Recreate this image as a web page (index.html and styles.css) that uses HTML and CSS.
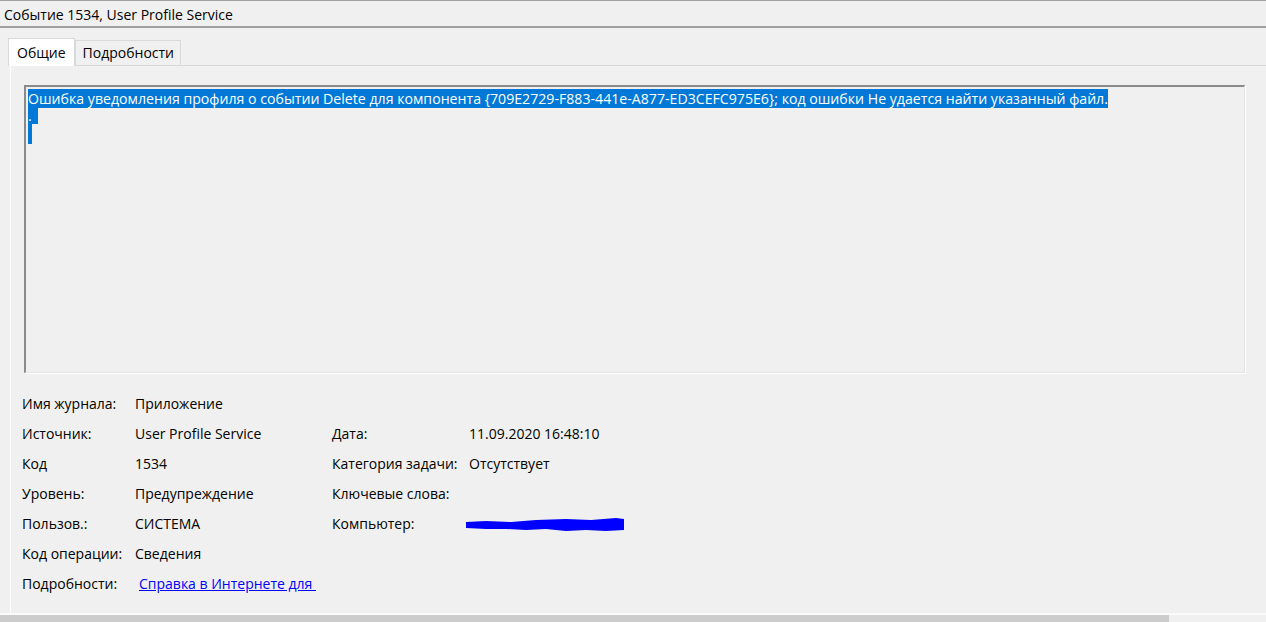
FILE: index.html
```html
<!DOCTYPE html>
<html lang="ru">
<head>
    <meta charset="UTF-8">
    <meta name="viewport" content="width=device-width, initial-scale=1.0">
    <title>Событие 1534, User Profile Service</title>
    <link rel="stylesheet" href="styles.css">
</head>
<body>
    <div class="janela">
        <div class="titulo">Событие 1534, User Profile Service</div>

        <div class="abas">
            <div class="aba aba_ativa">Общие</div>
            <div class="aba">Подробности</div>
        </div>

        <div class="painel">
            <div class="caixa_texto">
                <div class="linha"><span class="sel">Ошибка уведомления профиля о событии Delete для компонента {709E2729-F883-441e-A877-ED3CEFC975E6}; код ошибки Не удается найти указанный файл.</span></div>
                <div class="linha"><span class="sel sel_ponto">.</span></div>
                <div class="linha"><span class="sel sel_cursor"></span></div>
            </div>

            <div class="campos">
                <div class="rotulo">Имя журнала:</div>
                <div class="valor">Приложение</div>
                <div class="rotulo"></div>
                <div class="valor"></div>

                <div class="rotulo">Источник:</div>
                <div class="valor">User Profile Service</div>
                <div class="rotulo">Дата:</div>
                <div class="valor">11.09.2020 16:48:10</div>

                <div class="rotulo">Код</div>
                <div class="valor">1534</div>
                <div class="rotulo">Категория задачи:</div>
                <div class="valor">Отсутствует</div>

                <div class="rotulo">Уровень:</div>
                <div class="valor">Предупреждение</div>
                <div class="rotulo">Ключевые слова:</div>
                <div class="valor"></div>

                <div class="rotulo">Пользов.:</div>
                <div class="valor">СИСТЕМА</div>
                <div class="rotulo">Компьютер:</div>
                <div class="valor">
                    <!-- nome do computador riscado -->
                    <svg class="risco" width="160" height="16" viewBox="0 0 160 16">
                        <path d="M0 5 L20 4 L45 5 L70 3 L100 2 L125 3 L150 1 L158 2 L158 13 L140 14 L120 13 L100 14 L80 12 L60 13 L40 12 L20 12 L0 11 Z" fill="#0000ff"/>
                    </svg>
                </div>

                <div class="rotulo">Код операции:</div>
                <div class="valor">Сведения</div>
                <div class="rotulo"></div>
                <div class="valor"></div>

                <div class="rotulo">Подробности:</div>
                <div class="valor"><a class="link" href="#">Справка в Интернете для&nbsp;</a></div>
                <div class="rotulo"></div>
                <div class="valor"></div>
            </div>
        </div>

        <div class="rodape">
            <div class="rodape_barra"></div>
        </div>
    </div>
</body>
</html>
```

FILE: styles.css
```css
*{
    padding: 0px;
    margin: 0px;
    box-sizing: border-box;
}
body{
    background-color: #f0f0f0;
    font-family: "Segoe UI", "Open Sans", sans-serif;
    font-size: 14px;
    color: #000;
    overflow: hidden;
}
.janela{
    display: flex;
    flex-direction: column;
    height: 622px;
    border-top: 1px solid #a0a0a0;
}
.titulo{
    height: 27px;
    padding-left: 4px;
    line-height: 27px;
    border-bottom: 2px solid #a0a0a0;
}
.abas{
    display: flex;
    align-items: flex-end;
    height: 37px;
    padding-left: 8px;
}
.aba{
    height: 25px;
    padding: 0px 6px 0px 7px;
    line-height: 24px;
    background-color: #f0f0f0;
    border: 1px solid #d9d9d9;
    border-bottom: none;
}
.aba_ativa{
    height: 28px;
    padding: 0px 8px;
    line-height: 27px;
    background-color: #fff;
    margin-bottom: -1px;
    position: relative;
    z-index: 1;
}
.painel{
    flex: 1;
    margin-left: 10px;
    border-top: 1px solid #d9d9d9;
    border-left: 1px solid #fff;
    padding: 19px 21px 0px 13px;
}
.caixa_texto{
    height: 288px;
    border-top: 2px solid #8a8a8a;
    border-left: 2px solid #8a8a8a;
    border-right: 1px solid #e3e3e3;
    border-bottom: 1px solid #e3e3e3;
    box-shadow: 1px 1px 0px #fff;
    padding: 3px 2px;
    font-size: 14.15px;
    line-height: 17px;
}
.linha{
    height: 17px;
}
.sel{
    background-color: #0078d7;
    color: #fff;
}
.sel_ponto{
    display: inline-block;
    width: 10px;
}
.sel_cursor{
    display: inline-block;
    width: 4px;
    height: 20px;
}
.campos{
    display: grid;
    grid-template-columns: 113px 197px 137px 1fr;
    grid-auto-rows: 30px;
    margin-top: 16px;
    margin-left: -2px;
}
.rotulo, .valor{
    line-height: 30px;
    white-space: nowrap;
}
.risco{
    vertical-align: middle;
    margin-left: -3px;
}
.link{
    color: #0000ff;
    margin-left: 4px;
}
.rodape{
    height: 9px;
    border-top: 2px solid #fafafa;
}
.rodape_barra{
    width: 1169px;
    height: 7px;
    background-color: #cccccc;
}
```
